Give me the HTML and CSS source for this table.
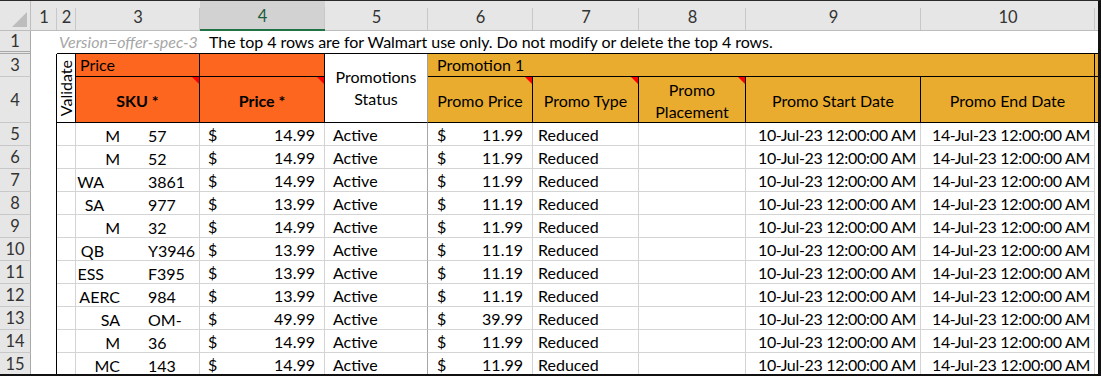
FILE: index.html
```html
<!DOCTYPE html>
<html>
<head>
<meta charset="utf-8">
<link rel="stylesheet" href="styles.css">
</head>
<body>
<div class="sheet">
  <!-- column headers -->
  <div class="corner"><svg width="15" height="15" viewBox="0 0 15 15"><polygon points="15,0 15,15 0,15" fill="#bdbdbd"/></svg></div>
  <div class="ch">1</div>
  <div class="ch">2</div>
  <div class="ch">3</div>
  <div class="ch sel">4</div>
  <div class="ch">5</div>
  <div class="ch">6</div>
  <div class="ch">7</div>
  <div class="ch">8</div>
  <div class="ch">9</div>
  <div class="ch">10</div>
  <div class="ch last"></div>

  <!-- row 1 -->
  <div class="rh hidden-next">1</div>
  <div class="c"></div>
  <div class="c version">Version=offer-spec-3</div>
  <div class="c notice">The top 4 rows are for Walmart use only. Do not modify or delete the top 4 rows.</div>

  <!-- rows 3-4 -->
  <div class="rh">3</div>
  <div class="c blank2"></div>
  <div class="c validate"><span>Validate</span></div>
  <div class="c orange grp">Price</div>
  <div class="c orange grp"></div>
  <div class="c status">Promotions<br>Status</div>
  <div class="c gold grp promo1">Promotion 1</div>
  <div class="c gold sliver"></div>

  <div class="rh">4</div>
  <div class="c orange hd bold flag">SKU *</div>
  <div class="c orange hd bold flag">Price *</div>
  <div class="c gold hd flag">Promo Price</div>
  <div class="c gold hd flag">Promo Type</div>
  <div class="c gold hd flag two">Promo<br>Placement</div>
  <div class="c gold hd">Promo Start Date</div>
  <div class="c gold hd">Promo End Date</div>
  <div class="c gold sliver"></div>

  <!-- data rows -->
  <div class="rh">5</div><div class="c d0"></div><div class="c d"></div>
  <div class="c d sku"><span class="l">M</span><span class="r">57</span></div>
  <div class="c d money"><span>$</span><span>14.99</span></div>
  <div class="c d act">Active</div>
  <div class="c d money pp"><span>$</span><span>11.99</span></div>
  <div class="c d txt">Reduced</div><div class="c d"></div>
  <div class="c d date">10-Jul-23 12:00:00 AM</div><div class="c d date">14-Jul-23 12:00:00 AM</div><div class="c dz"></div>

  <div class="rh">6</div><div class="c d0"></div><div class="c d"></div>
  <div class="c d sku"><span class="l">M</span><span class="r">52</span></div>
  <div class="c d money"><span>$</span><span>14.99</span></div>
  <div class="c d act">Active</div>
  <div class="c d money pp"><span>$</span><span>11.99</span></div>
  <div class="c d txt">Reduced</div><div class="c d"></div>
  <div class="c d date">10-Jul-23 12:00:00 AM</div><div class="c d date">14-Jul-23 12:00:00 AM</div><div class="c dz"></div>

  <div class="rh">7</div><div class="c d0"></div><div class="c d"></div>
  <div class="c d sku short"><span class="l">WA</span><span class="r">3861</span></div>
  <div class="c d money"><span>$</span><span>14.99</span></div>
  <div class="c d act">Active</div>
  <div class="c d money pp"><span>$</span><span>11.99</span></div>
  <div class="c d txt">Reduced</div><div class="c d"></div>
  <div class="c d date">10-Jul-23 12:00:00 AM</div><div class="c d date">14-Jul-23 12:00:00 AM</div><div class="c dz"></div>

  <div class="rh">8</div><div class="c d0"></div><div class="c d"></div>
  <div class="c d sku short"><span class="l">SA</span><span class="r">977</span></div>
  <div class="c d money"><span>$</span><span>13.99</span></div>
  <div class="c d act">Active</div>
  <div class="c d money pp"><span>$</span><span>11.19</span></div>
  <div class="c d txt">Reduced</div><div class="c d"></div>
  <div class="c d date">10-Jul-23 12:00:00 AM</div><div class="c d date">14-Jul-23 12:00:00 AM</div><div class="c dz"></div>

  <div class="rh">9</div><div class="c d0"></div><div class="c d"></div>
  <div class="c d sku"><span class="l">M</span><span class="r">32</span></div>
  <div class="c d money"><span>$</span><span>14.99</span></div>
  <div class="c d act">Active</div>
  <div class="c d money pp"><span>$</span><span>11.99</span></div>
  <div class="c d txt">Reduced</div><div class="c d"></div>
  <div class="c d date">10-Jul-23 12:00:00 AM</div><div class="c d date">14-Jul-23 12:00:00 AM</div><div class="c dz"></div>

  <div class="rh">10</div><div class="c d0"></div><div class="c d"></div>
  <div class="c d sku short"><span class="l">QB</span><span class="r">Y3946</span></div>
  <div class="c d money"><span>$</span><span>13.99</span></div>
  <div class="c d act">Active</div>
  <div class="c d money pp"><span>$</span><span>11.19</span></div>
  <div class="c d txt">Reduced</div><div class="c d"></div>
  <div class="c d date">10-Jul-23 12:00:00 AM</div><div class="c d date">14-Jul-23 12:00:00 AM</div><div class="c dz"></div>

  <div class="rh">11</div><div class="c d0"></div><div class="c d"></div>
  <div class="c d sku short"><span class="l">ESS</span><span class="r">F395</span></div>
  <div class="c d money"><span>$</span><span>13.99</span></div>
  <div class="c d act">Active</div>
  <div class="c d money pp"><span>$</span><span>11.19</span></div>
  <div class="c d txt">Reduced</div><div class="c d"></div>
  <div class="c d date">10-Jul-23 12:00:00 AM</div><div class="c d date">14-Jul-23 12:00:00 AM</div><div class="c dz"></div>

  <div class="rh">12</div><div class="c d0"></div><div class="c d"></div>
  <div class="c d sku"><span class="l">AERC</span><span class="r">984</span></div>
  <div class="c d money"><span>$</span><span>13.99</span></div>
  <div class="c d act">Active</div>
  <div class="c d money pp"><span>$</span><span>11.19</span></div>
  <div class="c d txt">Reduced</div><div class="c d"></div>
  <div class="c d date">10-Jul-23 12:00:00 AM</div><div class="c d date">14-Jul-23 12:00:00 AM</div><div class="c dz"></div>

  <div class="rh">13</div><div class="c d0"></div><div class="c d"></div>
  <div class="c d sku"><span class="l">SA</span><span class="r">OM-</span></div>
  <div class="c d money"><span>$</span><span>49.99</span></div>
  <div class="c d act">Active</div>
  <div class="c d money pp"><span>$</span><span>39.99</span></div>
  <div class="c d txt">Reduced</div><div class="c d"></div>
  <div class="c d date">10-Jul-23 12:00:00 AM</div><div class="c d date">14-Jul-23 12:00:00 AM</div><div class="c dz"></div>

  <div class="rh">14</div><div class="c d0"></div><div class="c d"></div>
  <div class="c d sku"><span class="l">M</span><span class="r">36</span></div>
  <div class="c d money"><span>$</span><span>14.99</span></div>
  <div class="c d act">Active</div>
  <div class="c d money pp"><span>$</span><span>11.99</span></div>
  <div class="c d txt">Reduced</div><div class="c d"></div>
  <div class="c d date">10-Jul-23 12:00:00 AM</div><div class="c d date">14-Jul-23 12:00:00 AM</div><div class="c dz"></div>

  <div class="rh lastrow">15</div><div class="c d0"></div><div class="c d lastrow"></div>
  <div class="c d sku lastrow"><span class="l">MC</span><span class="r">143</span></div>
  <div class="c d money lastrow"><span>$</span><span>14.99</span></div>
  <div class="c d act lastrow">Active</div>
  <div class="c d money pp lastrow"><span>$</span><span>11.99</span></div>
  <div class="c d txt lastrow">Reduced</div><div class="c d lastrow"></div>
  <div class="c d date lastrow">10-Jul-23 12:00:00 AM</div><div class="c d date lastrow">14-Jul-23 12:00:00 AM</div><div class="c dz"></div>
</div>
</body>
</html>
```

FILE: styles.css
```css
html, body {
  margin: 0;
  padding: 0;
  background: #ffffff;
}

.sheet {
  width: 1101px;
  height: 376px;
  box-sizing: border-box;
  border-top: 1px solid #2b2b2b;
  border-right: 3px solid #111111;
  border-bottom: 2px solid #111111;
  display: grid;
  grid-template-columns: 31px 26px 19px 124px 125px 103px 105px 106px 107px 175px 174px 3px;
  grid-template-rows: 30px 23px 23px 46px repeat(10, 23px) 21px;
  font-family: Lato, "Liberation Sans", sans-serif;
  font-size: 16px;
  color: #000000;
  overflow: hidden;
}

.c {
  box-sizing: border-box;
  display: flex;
  align-items: center;
  overflow: hidden;
  white-space: nowrap;
  min-width: 0;
  line-height: 22px;
}

/* column headers */
.corner {
  background: #e6e6e6;
  border-bottom: 1px solid #bdbdbd;
  border-right: 1px solid #bdbdbd;
  display: flex;
  align-items: flex-end;
  justify-content: flex-end;
  padding: 0 3px 3px 0;
  box-sizing: border-box;
}

.ch {
  box-sizing: border-box;
  background: linear-gradient(#c8c8c8, #c8c8c8) right bottom / 1px 22px no-repeat, #e6e6e6;
  border-bottom: 1px solid #bdbdbd;
  display: flex;
  align-items: center;
  justify-content: center;
  color: #333333;
  font-size: 16.5px;
  padding-top: 2px;
}

.ch.sel {
  background: linear-gradient(#c8c8c8, #c8c8c8) right bottom / 1px 22px no-repeat, #d2d2d2;
  border-bottom: 2px solid #217346;
  color: #1d5c3a;
}

.ch.last {
  background: #e6e6e6;
}

/* row headers */
.rh {
  box-sizing: border-box;
  background: #e6e6e6;
  border-right: 1px solid #a8a8a8;
  border-bottom: 1px solid #c8c8c8;
  display: flex;
  align-items: center;
  justify-content: center;
  color: #333333;
  font-size: 16.5px;
}

.rh.hidden-next {
  border-bottom: 3px double #a8a8a8;
}

.rh.lastrow {
  border-bottom: none;
}

/* row 1 */
.version {
  grid-column: span 2;
  color: #a6a6a6;
  font-style: italic;
  padding-left: 2px;
  border-bottom: 1px solid #000000;
}

.notice {
  grid-column: span 8;
  padding-left: 9px;
  border-bottom: 1px solid #000000;
  letter-spacing: -0.05px;
}

/* header block */
.blank2 {
  grid-row: span 2;
  border-right: 1px solid #000000;
}

.validate {
  grid-row: span 2;
  border-right: 1px solid #000000;
  border-bottom: 1px solid #000000;
  justify-content: center;
  align-items: center;
  overflow: visible;
}

.validate span {
  writing-mode: vertical-rl;
  transform: rotate(180deg);
  line-height: 16px;
  font-size: 16px;
}

.orange {
  background: #fd661f;
}

.gold {
  background: #e9ac2f;
}

.grp {
  border-right: 1px solid #000000;
  border-bottom: 1px solid #000000;
  padding-left: 4px;
}

.promo1 {
  grid-column: span 5;
  padding-left: 9px;
}

.status {
  grid-row: span 2;
  border-right: 1px solid #a0a0a0;
  border-bottom: 1px solid #000000;
  justify-content: center;
  text-align: center;
  white-space: normal;
}

.hd {
  border-right: 1px solid #000000;
  border-bottom: 1px solid #000000;
  justify-content: center;
  text-align: center;
  padding-top: 2px;
  position: relative;
}

.hd.two {
  white-space: normal;
  line-height: 22px;
}

.bold {
  font-weight: bold;
}

.flag::after {
  content: "";
  position: absolute;
  top: 0;
  right: 0;
  width: 0;
  height: 0;
  border-top: 7px solid #ff0000;
  border-left: 7px solid transparent;
}

.sliver {
  border-bottom: 1px solid #000000;
}

/* data */
.d0 {
  border-right: 1px solid #000000;
}

.d {
  border-right: 1px solid #d4d4d4;
  border-bottom: 1px solid #d4d4d4;
  padding-top: 2px;
}

.d.lastrow {
  border-bottom: none;
}

.dz {
  background: #ffffff;
}

.sku {
  display: grid;
  grid-template-columns: 44px 28px 51px;
  align-items: center;
}

.sku .l {
  grid-column: 1;
  text-align: right;
}

.sku .r {
  grid-column: 3;
  text-align: left;
}

.sku.short {
  grid-template-columns: 28px 44px 51px;
}

.money {
  justify-content: space-between;
  padding-left: 8px;
  padding-right: 9px;
}

.money.pp {
  padding-left: 9px;
}

.act {
  padding-left: 8px;
  border-right-color: #a6a6a6;
}

.txt {
  padding-left: 5px;
}

.date {
  justify-content: flex-end;
  padding-right: 4px;
  letter-spacing: -0.3px;
}
```
